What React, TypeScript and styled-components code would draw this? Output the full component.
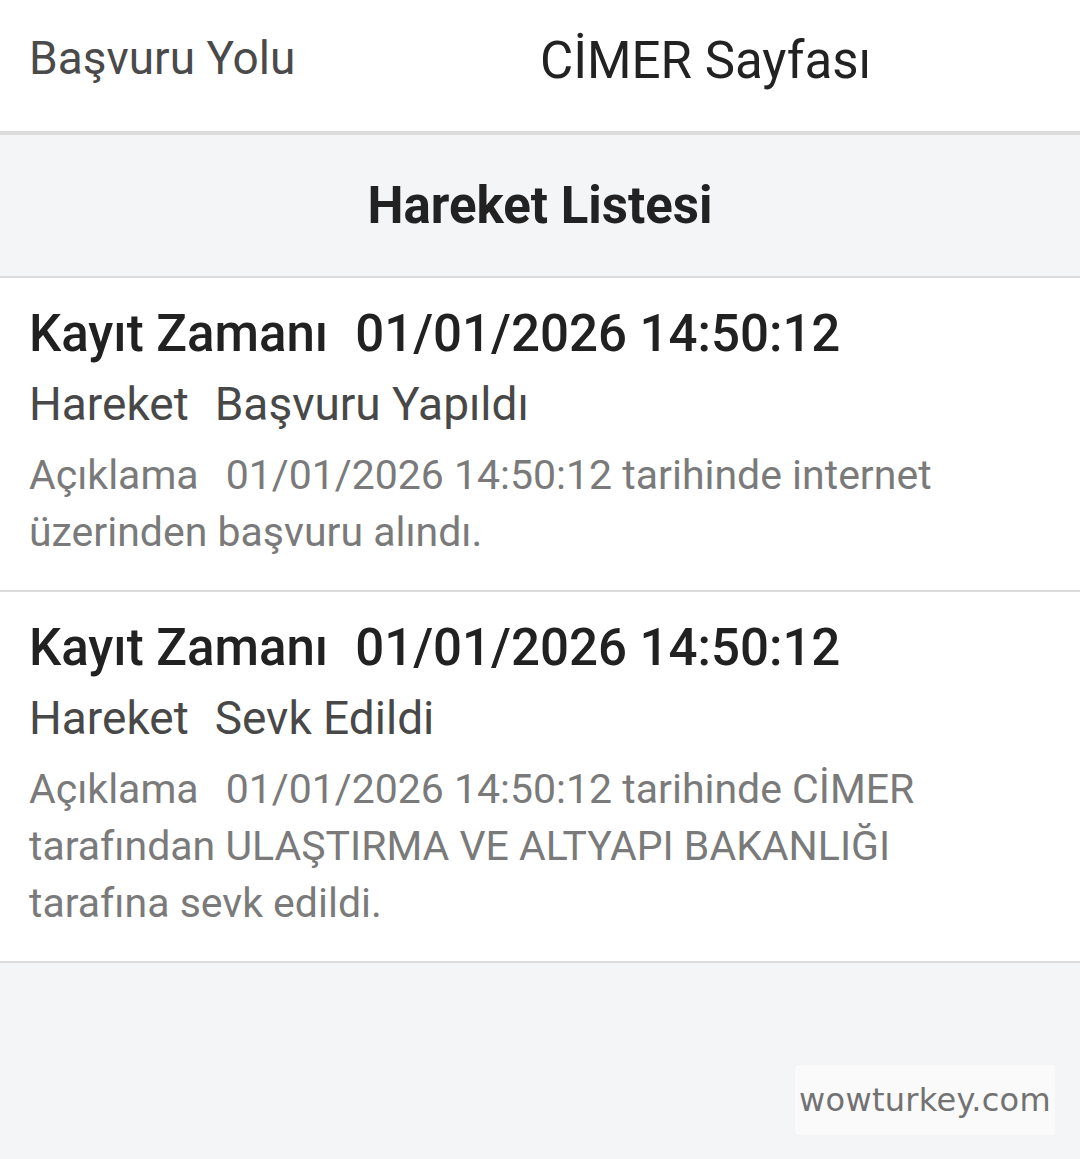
import React from 'react'
import styled, { createGlobalStyle } from 'styled-components'

const GlobalStyle = createGlobalStyle`
  html, body {
    margin: 0;
    padding: 0;
    background: #f4f5f7;
    font-family: Roboto, "Noto Sans", sans-serif;
  }
`

const Page = styled.div`
  position: relative;
  min-height: 1159px;
  background: #f4f5f7;
`

const InfoRow = styled.div`
  display: grid;
  grid-template-columns: 1fr 1fr;
  align-items: center;
  height: 131px;
  background: #fff;
  border-bottom: 4px solid #dcdcdc;
`

const InfoLabel = styled.div`
  padding-left: 29px;
  font-size: 46px;
  color: #4a4a4a;
  margin-top: -16px;
`

const InfoValue = styled.div`
  font-size: 51px;
  color: #222;
  margin-top: -10px;
`

const SectionHeader = styled.div`
  display: flex;
  align-items: center;
  justify-content: center;
  height: 141px;
  border-bottom: 2px solid #dcdcdc;
  font-size: 51px;
  font-weight: 700;
  color: #222;
`

const Entry = styled.div`
  background: #fff;
  padding: 21px 100px 29px 29px;
  border-bottom: 2px solid #dcdcdc;
`

const TimeLine = styled.div`
  font-size: 51px;
  line-height: 70px;
  font-weight: 500;
  color: #212121;
  white-space: nowrap;
`

const ActionLine = styled.div`
  font-size: 46px;
  line-height: 70px;
  color: #484848;
  white-space: nowrap;
`

const DescLine = styled.div`
  margin-top: 8px;
  font-size: 41px;
  line-height: 57px;
  color: #7a7a7a;
`

const Label = styled.span<{ $gap: number }>`
  margin-right: ${(p) => p.$gap}px;
`

const Value = styled.span``

const Watermark = styled.div`
  position: absolute;
  right: 25px;
  top: 1065px;
  width: 260px;
  height: 70px;
  display: flex;
  align-items: center;
  justify-content: center;
  background: #fafafa;
  border-radius: 4px;
  font-family: "DejaVu Sans", Verdana, sans-serif;
  font-size: 32px;
  letter-spacing: 0.3px;
  color: #727272;
`

type Movement = {
  time: string
  action: string
  description: string
}

const movements: Movement[] = [
  {
    time: '01/01/2026 14:50:12',
    action: 'Başvuru Yapıldı',
    description: '01/01/2026 14:50:12 tarihinde internet üzerinden başvuru alındı.',
  },
  {
    time: '01/01/2026 14:50:12',
    action: 'Sevk Edildi',
    description:
      '01/01/2026 14:50:12 tarihinde CİMER tarafından ULAŞTIRMA VE ALTYAPI BAKANLIĞI tarafına sevk edildi.',
  },
]

export default function App() {
  return (
    <Page>
      <GlobalStyle />
      <InfoRow>
        <InfoLabel>Başvuru Yolu</InfoLabel>
        <InfoValue>CİMER Sayfası</InfoValue>
      </InfoRow>
      <SectionHeader>Hareket Listesi</SectionHeader>
      {movements.map((m, i) => (
        <Entry key={i}>
          <TimeLine>
            <Label $gap={27}>Kayıt Zamanı</Label>
            <Value>{m.time}</Value>
          </TimeLine>
          <ActionLine>
            <Label $gap={26}>Hareket</Label>
            <Value>{m.action}</Value>
          </ActionLine>
          <DescLine>
            <Label $gap={27}>Açıklama</Label>
            <Value>{m.description}</Value>
          </DescLine>
        </Entry>
      ))}
      <Watermark>wowturkey.com</Watermark>
    </Page>
  )
}
